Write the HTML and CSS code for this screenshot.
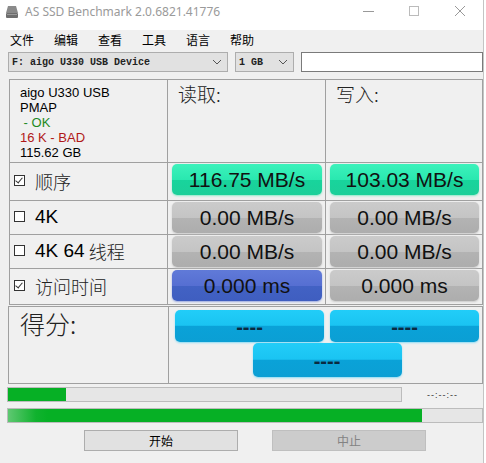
FILE: index.html
```html
<html>
<head>
    <title>AS SSD Benchmark</title>
    <meta http-equiv="Content-Type" content="text/html;charset=UTF-8"/>
    <link rel="stylesheet" href="styles.css">
</head>
<body>
<div class="window">
    <div class="titlebar">
        <svg class="app-icon" width="14" height="14" viewBox="0 0 14 14">
            <path d="M3 1 H11 L13 8 H1 Z" fill="#8a8a8a"/>
            <rect x="1" y="8" width="12" height="5" rx="1" fill="#6e6e6e"/>
            <rect x="2" y="9" width="10" height="1" fill="#9a9a9a"/>
        </svg>
        <span class="title">AS SSD Benchmark 2.0.6821.41776</span>
        <div class="controls">
            <svg width="46" height="20" viewBox="0 0 46 20"><path d="M18 8.5 H29" stroke="#999" stroke-width="1"/></svg>
            <svg width="46" height="20" viewBox="0 0 46 20"><rect x="18.5" y="3.5" width="9" height="9" fill="none" stroke="#bbb" stroke-width="1"/></svg>
            <svg width="46" height="20" viewBox="0 0 46 20"><path d="M18 3 L28 13 M28 3 L18 13" stroke="#999" stroke-width="1"/></svg>
        </div>
    </div>

    <div class="menubar">
        <span>文件</span>
        <span>编辑</span>
        <span>查看</span>
        <span>工具</span>
        <span>语言</span>
        <span>帮助</span>
    </div>

    <div class="toolbar">
        <div class="combo drive">
            <span>F: aigo U330 USB Device</span>
            <svg width="10" height="6" viewBox="0 0 10 6"><path d="M1 1 L5 5 L9 1" fill="none" stroke="#555" stroke-width="1"/></svg>
        </div>
        <div class="combo size">
            <span>1 GB</span>
            <svg width="10" height="6" viewBox="0 0 10 6"><path d="M1 1 L5 5 L9 1" fill="none" stroke="#555" stroke-width="1"/></svg>
        </div>
        <div class="textbox"></div>
    </div>

    <div class="results">
        <div class="cell info">
            <div>aigo U330 USB</div>
            <div>PMAP</div>
            <div class="ok">&nbsp;- OK</div>
            <div class="bad">16 K - BAD</div>
            <div>115.62 GB</div>
        </div>
        <div class="cell head">读取:</div>
        <div class="cell head">写入:</div>

        <div class="cell label"><span class="check on"></span>顺序</div>
        <div class="cell"><div class="pill green">116.75 MB/s</div></div>
        <div class="cell"><div class="pill green">103.03 MB/s</div></div>

        <div class="cell label"><span class="check"></span><span class="latin">4K</span></div>
        <div class="cell"><div class="pill gray">0.00 MB/s</div></div>
        <div class="cell"><div class="pill gray">0.00 MB/s</div></div>

        <div class="cell label"><span class="check"></span><span class="latin">4K 64</span>&nbsp;线程</div>
        <div class="cell"><div class="pill gray">0.00 MB/s</div></div>
        <div class="cell"><div class="pill gray">0.00 MB/s</div></div>

        <div class="cell label"><span class="check on"></span>访问时间</div>
        <div class="cell"><div class="pill blue">0.000 ms</div></div>
        <div class="cell"><div class="pill gray">0.000 ms</div></div>
    </div>

    <div class="score">
        <div class="score-title">得分:</div>
        <div class="score-boxes">
            <div class="score-box">----</div>
            <div class="score-box">----</div>
            <div class="score-box">----</div>
        </div>
    </div>

    <div class="progress-row">
        <div class="bar short"><div class="fill" style="width: 58px"></div></div>
        <span class="time">--:--:--</span>
    </div>
    <div class="bar long"><div class="fill glow" style="width: 414px"></div></div>

    <div class="buttons">
        <div class="btn">开始</div>
        <div class="btn disabled">中止</div>
    </div>
</div>
</body>
</html>
```

FILE: styles.css
```css
body {
    margin: 0;
    background: #ffffff;
    font-family: "Liberation Sans", "Noto Sans CJK SC", sans-serif;
}

.window {
    width: 483px;
    height: 463px;
    background: #f0f0f0;
    border-right: 1px solid #c4c4c4;
    overflow: hidden;
}

.titlebar {
    height: 30px;
    background: #ffffff;
    display: flex;
    align-items: flex-start;
}

.app-icon {
    margin: 5px 0 0 5px;
}

.title {
    margin: 4px 0 0 6px;
    font-size: 12px;
    line-height: 16px;
    color: #9a9a9a;
    font-family: "Noto Sans", "Liberation Sans", sans-serif;
}

.controls {
    margin-left: auto;
    display: flex;
    padding-top: 3px;
}

.menubar {
    height: 22px;
    display: flex;
    gap: 20px;
    padding-left: 10px;
    font-size: 12px;
    line-height: 20px;
    color: #000;
    font-family: "Noto Sans CJK SC", sans-serif;
}

.toolbar {
    display: flex;
    gap: 7px;
    padding-left: 8px;
    height: 20px;
}

.combo {
    box-sizing: border-box;
    height: 20px;
    background: #e1e1e1;
    border: 1px solid #adadad;
    display: flex;
    align-items: center;
    justify-content: space-between;
    padding: 0 5px 0 3px;
    font-family: "Liberation Mono", monospace;
    font-size: 10px;
    font-weight: bold;
    color: #222;
}

.combo.drive {
    width: 220px;
}

.combo.size {
    width: 59px;
}

.textbox {
    box-sizing: border-box;
    width: 182px;
    height: 20px;
    background: #ffffff;
    border: 1px solid #7a7a7a;
}

.results {
    display: grid;
    grid-template-columns: 157px 157px 156px;
    grid-template-rows: 82px 37px 33px 33px 35px;
    gap: 1px;
    background: #a0a0a0;
    border: 1px solid #a0a0a0;
    margin: 7px 0 0 9px;
    width: fit-content;
}

.cell {
    background: #f0f0f0;
}

.info {
    padding: 5px 0 0 10px;
    font-size: 13px;
    line-height: 15px;
    color: #000;
}

.info .ok {
    color: #1f8a1f;
}

.info .bad {
    color: #b01818;
}

.head {
    padding: 1px 0 0 10px;
    font-family: "Noto Sans CJK SC", sans-serif;
    font-size: 19px;
    line-height: 26px;
    color: #222;
    font-weight: 300;
}

.label {
    display: flex;
    align-items: center;
    padding: 0 0 2px 4px;
    font-family: "Noto Sans CJK SC", sans-serif;
    font-size: 18px;
    font-weight: 300;
    color: #222;
}

.label .latin {
    font-family: "Liberation Sans", sans-serif;
    font-size: 19px;
    font-weight: normal;
    color: #000;
}

.check {
    box-sizing: border-box;
    width: 11px;
    height: 11px;
    border: 1px solid #333;
    background: #fff;
    margin-right: 10px;
    position: relative;
}

.check.on::after {
    content: "";
    position: absolute;
    left: 2px;
    top: 0px;
    width: 3px;
    height: 6px;
    border: solid #333;
    border-width: 0 1px 1px 0;
    transform: rotate(40deg);
}

.pill {
    height: 31px;
    margin: 1px 3px 0 4px;
    border-radius: 5px;
    display: flex;
    align-items: center;
    justify-content: center;
    font-size: 21px;
    color: #111;
}

.pill.green {
    background: linear-gradient(to bottom, #3cf2bb 0%, #2ae8b0 50%, #18d49c 52%, #1ccf99 100%);
    box-shadow: 0 1px 2px #8fe9c9;
}

.pill.gray {
    background: linear-gradient(to bottom, #cbcbcb 0%, #c4c4c4 50%, #b3b3b3 52%, #adadad 100%);
    box-shadow: 0 1px 2px #c9c9c9;
}

.pill.blue {
    background: linear-gradient(to bottom, #607ad8 0%, #566fd2 50%, #4262c4 52%, #3f5ec0 100%);
    box-shadow: 0 1px 2px #9aa9e0;
}

.score {
    display: grid;
    grid-template-columns: 159px 313px;
    gap: 1px;
    background: #a0a0a0;
    border: 1px solid #a0a0a0;
    margin: 1px 0 0 8px;
    width: fit-content;
    height: 76px;
}

.score-title {
    background: #f0f0f0;
    padding-left: 11px;
    font-family: "Noto Sans CJK SC", sans-serif;
    font-size: 25px;
    font-weight: 300;
    line-height: 32px;
    color: #222;
}

.score-boxes {
    background: #f0f0f0;
    display: flex;
    flex-wrap: wrap;
    justify-content: center;
    align-content: flex-start;
    column-gap: 6px;
    row-gap: 1px;
    padding: 3px 0 0 3px;
}

.score-box {
    width: 149px;
    height: 32px;
    border-radius: 5px;
    background: linear-gradient(to bottom, #22cdf8 0%, #1ac4f2 48%, #0aa2d8 50%, #0b9fd4 100%);
    box-shadow: 0 1px 2px #8edcf5;
    display: flex;
    align-items: center;
    justify-content: center;
    padding-top: 3px;
    box-sizing: border-box;
    font-size: 20px;
    font-weight: bold;
    color: #0a2a40;
}

.score-box:last-child {
    height: 34px;
}

.progress-row {
    display: flex;
    align-items: center;
    margin: 3px 0 0 7px;
}

.bar {
    box-sizing: border-box;
    height: 15px;
    background: #e6e6e6;
    border: 1px solid #bcbcbc;
}

.bar.short {
    width: 395px;
}

.bar.long {
    width: 476px;
    margin: 6px 0 0 7px;
}

.fill {
    height: 100%;
    background: #06b025;
}

.fill.glow {
    background: linear-gradient(to right, #5fc872 0px, #10b22e 28px, #06b025 40px);
}

.time {
    margin-left: 25px;
    font-size: 9px;
    color: #333;
    letter-spacing: 1px;
}

.buttons {
    display: flex;
    gap: 34px;
    padding: 7px 0 0 84px;
}

.btn {
    box-sizing: border-box;
    width: 154px;
    height: 21px;
    background: #e1e1e1;
    border: 1px solid #adadad;
    display: flex;
    align-items: center;
    justify-content: center;
    font-family: "Noto Sans CJK SC", sans-serif;
    font-size: 12px;
    color: #000;
}

.btn.disabled {
    background: #cccccc;
    border-color: #bfbfbf;
    color: #838383;
}
```
